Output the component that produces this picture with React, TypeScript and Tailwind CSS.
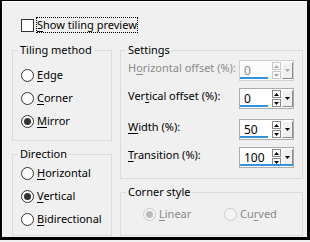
import React from "react";

type RadioProps = {
  label: string;
  mnemonic: number;
  checked?: boolean;
  disabled?: boolean;
};

function Label({ text, at }: { text: string; at: number }) {
  return (
    <>
      {text.slice(0, at)}
      <span className="underline underline-offset-[2px]">{text[at]}</span>
      {text.slice(at + 1)}
    </>
  );
}

function Radio({ label, mnemonic, checked, disabled }: RadioProps) {
  return (
    <div className="flex items-center h-[23px] gap-[3px]">
      <div
        className={
          "w-[13px] h-[13px] rounded-full border flex items-center justify-center " +
          (disabled ? "border-[#cccccc] bg-[#f4f4f4]" : "border-[#333333] bg-white")
        }
      >
        {checked && (
          <div
            className={
              "w-[7px] h-[7px] rounded-full " +
              (disabled ? "bg-[#bcbcbc]" : "bg-[#333333]")
            }
          />
        )}
      </div>
      <span className={disabled ? "text-[#8a8a8a]" : "text-black"}>
        <Label text={label} at={mnemonic} />
      </span>
    </div>
  );
}

function Tri({ up, color }: { up?: boolean; color: string }) {
  return (
    <svg width="5" height="3" viewBox="0 0 5 3">
      <path d={up ? "M0 3 L2.5 0 L5 3 Z" : "M0 0 L2.5 3 L5 0 Z"} fill={color} />
    </svg>
  );
}

function SpinBox({
  value,
  full,
  disabled,
}: {
  value: string;
  full?: boolean;
  disabled?: boolean;
}) {
  const arrow = disabled ? "#a8a8a8" : "#000000";
  const edge = disabled ? "border-[#c8c8c8]" : "border-[#8a8a8a]";
  return (
    <div
      className={
        "relative w-[55px] h-[21px] border flex items-stretch " +
        (disabled ? "border-[#d0d0d0] bg-[#fbfbfb]" : "border-[#acacac] bg-white")
      }
    >
      <div
        className={
          "w-[32px] pl-[4px] leading-[19px] text-[12px] " +
          (disabled ? "text-[#8a8a8a]" : "text-black")
        }
      >
        {value}
      </div>
      <div className="w-[9px] flex flex-col justify-center gap-[1px]">
        <div className={"h-[8px] border flex items-center justify-center " + edge}>
          <Tri up color={arrow} />
        </div>
        <div className={"h-[8px] border flex items-center justify-center " + edge}>
          <Tri color={arrow} />
        </div>
      </div>
      <div className="ml-[1px] my-[1px] w-[11px] border-l border-t border-white border-r border-b border-r-[#8a8a8a] border-b-[#8a8a8a] bg-[#f0f0f0] flex items-center justify-center">
        <Tri color={arrow} />
      </div>
      <div
        className={
          "absolute left-0 bottom-[1px] h-[2px] bg-[#3393df] " +
          (full ? "w-[53px]" : "w-[28px]")
        }
      />
    </div>
  );
}

function Group({
  title,
  className,
  inner,
  children,
}: {
  title: string;
  className: string;
  inner: string;
  children: React.ReactNode;
}) {
  return (
    <fieldset className={"border border-[#dcdcdc] " + className}>
      <legend className="ml-[5px] px-[2px] leading-[16px]">{title}</legend>
      <div className={inner}>{children}</div>
    </fieldset>
  );
}

export default function App() {
  return (
    <div className="w-[310px] h-[242px] bg-[#f0f0f0] font-['Noto_Sans',sans-serif] text-[11px] text-black whitespace-nowrap">
      <div className="h-[240px] border-t border-l-2 border-r-[3px] border-b-[3px] border-black shadow-[inset_1px_1px_0_#ffffff]">
        <div className="pt-[16px] pl-[19px] flex items-center h-[32px]">
          <div className="w-[13px] h-[13px] border border-[#333333] bg-white" />
          <span className="ml-[2px] border border-dotted border-black leading-[14px]">
            <Label text="Show tiling preview" at={0} />
          </span>
        </div>

        <div className="mt-[9px] pl-[10px] flex gap-[8px]">
          <div className="w-[100px] flex flex-col gap-[5px]">
            <Group title="Tiling method" className="h-[99px]" inner="pl-[8px] pt-[6px]">
              <Radio label="Edge" mnemonic={0} />
              <Radio label="Corner" mnemonic={0} />
              <Radio label="Mirror" mnemonic={0} checked />
            </Group>
            <Group title="Direction" className="h-[90px]" inner="pl-[8px]">
              <Radio label="Horizontal" mnemonic={0} />
              <Radio label="Vertical" mnemonic={0} checked />
              <Radio label="Bidirectional" mnemonic={0} />
            </Group>
          </div>

          <div className="w-[183px] flex flex-col gap-[5px]">
            <Group title="Settings" className="h-[137px]" inner="pl-[7px] pt-[2px]">
              <div className="flex items-start">
                <span className="w-[111px] leading-[16px] text-[#8a8a8a]">
                  <Label text="Horizontal offset (%):" at={1} />
                </span>
                <SpinBox value="0" disabled />
              </div>
              <div className="flex items-start mt-[7px]">
                <span className="w-[111px] leading-[16px]">
                  <Label text="Vertical offset (%):" at={3} />
                </span>
                <SpinBox value="0" />
              </div>
              <div className="flex items-start mt-[10px]">
                <span className="w-[111px] leading-[16px]">
                  <Label text="Width (%):" at={0} />
                </span>
                <SpinBox value="50" />
              </div>
              <div className="flex items-start mt-[7px]">
                <span className="w-[111px] leading-[16px]">
                  <Label text="Transition (%):" at={0} />
                </span>
                <SpinBox value="100" full />
              </div>
            </Group>
            <Group title="Corner style" className="h-[52px]" inner="pl-[22px] pt-[3px]">
              <div className="flex">
                <div className="w-[81px]">
                  <Radio label="Linear" mnemonic={0} checked disabled />
                </div>
                <Radio label="Curved" mnemonic={2} disabled />
              </div>
            </Group>
          </div>
        </div>
      </div>
    </div>
  );
}
